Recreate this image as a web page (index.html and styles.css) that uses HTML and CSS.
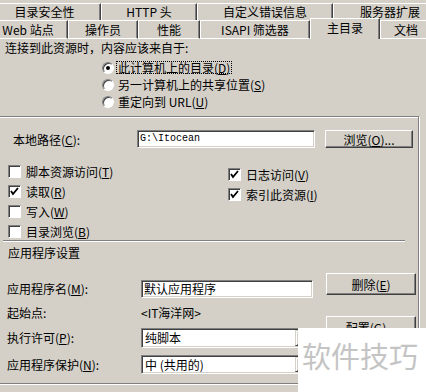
FILE: index.html
```html
<!DOCTYPE html>
<html lang="zh-CN">
<head>
    <meta charset="UTF-8">
    <meta name="viewport" content="width=device-width, initial-scale=1.0">
    <title>主目录</title>
    <link rel="stylesheet" href="styles.css">
</head>
<body>
    <div class="dialog">
        <div class="tabs">
            <div class="tab-row row-back">
                <div class="tab t-dirsec">目录安全性</div>
                <div class="tab t-http">HTTP 头</div>
                <div class="tab t-errors">自定义错误信息</div>
                <div class="tab t-ext">服务器扩展</div>
            </div>
            <div class="tab-row row-front">
                <div class="tab t-web">Web 站点</div>
                <div class="tab t-ops">操作员</div>
                <div class="tab t-perf">性能</div>
                <div class="tab t-isapi">ISAPI 筛选器</div>
                <div class="tab t-home selected">主目录</div>
                <div class="tab t-doc">文档</div>
            </div>
        </div>

        <p class="lead">连接到此资源时，内容应该来自于:</p>

        <div class="radios">
            <div class="radio"><span class="circle on"></span><span class="radio-text focus">此计算机上的目录(<u>D</u>)</span></div>
            <div class="radio"><span class="circle"></span><span class="radio-text">另一计算机上的共享位置(<u>S</u>)</span></div>
            <div class="radio"><span class="circle"></span><span class="radio-text">重定向到 URL(<u>U</u>)</span></div>
        </div>

        <div class="frame">
            <div class="path-row">
                <span class="path-label">本地路径(<u>C</u>):</span>
                <span class="field path-field">G:\Itocean</span>
                <span class="btn browse"><span>浏览(<u>O</u>)...</span></span>
            </div>

            <div class="checks">
                <div class="check-col left">
                    <div class="check"><span class="box"></span><span>脚本资源访问(<u>T</u>)</span></div>
                    <div class="check"><span class="box"><svg width="11" height="11" viewBox="0 0 11 11"><polyline points="2,5 4,8 9,2" fill="none" stroke="#000" stroke-width="1.8"/></svg></span><span>读取(<u>R</u>)</span></div>
                    <div class="check"><span class="box"></span><span>写入(<u>W</u>)</span></div>
                    <div class="check"><span class="box"></span><span>目录浏览(<u>B</u>)</span></div>
                </div>
                <div class="check-col right">
                    <div class="check"><span class="box"><svg width="11" height="11" viewBox="0 0 11 11"><polyline points="2,5 4,8 9,2" fill="none" stroke="#000" stroke-width="1.8"/></svg></span><span>日志访问(<u>V</u>)</span></div>
                    <div class="check"><span class="box"><svg width="11" height="11" viewBox="0 0 11 11"><polyline points="2,5 4,8 9,2" fill="none" stroke="#000" stroke-width="1.8"/></svg></span><span>索引此资源(<u>I</u>)</span></div>
                </div>
            </div>

            <div class="etch"></div>
            <div class="group-title">应用程序设置</div>

            <div class="app-grid">
                <span class="app-label row-a">应用程序名(<u>M</u>):</span>
                <span class="field app-name">默认应用程序</span>
                <span class="btn btn-delete"><span>删除(<u>E</u>)</span></span>

                <span class="app-label row-b">起始点:</span>
                <span class="start-point">&lt;IT海洋网&gt;</span>
                <span class="btn btn-config"><span>配置(<u>G</u>)...</span></span>

                <span class="app-label row-c">执行许可(<u>P</u>):</span>
                <span class="field combo combo-c"><span class="combo-text">纯脚本</span><span class="drop"><span class="arrow"></span></span></span>

                <span class="app-label row-d">应用程序保护(<u>N</u>):</span>
                <span class="field combo combo-d"><span class="combo-text">中 (共用的)</span><span class="drop"><span class="arrow"></span></span></span>
            </div>
        </div>

        <div class="watermark">软件技巧</div>
    </div>
</body>
</html>
```

FILE: styles.css
```css
* {
    box-sizing: border-box;
}
body {
    margin: 0;
    background: #d4d0c8;
    font-family: "Noto Sans CJK SC", sans-serif;
    font-size: 12px;
    color: #000;
}
u {
    text-decoration-thickness: 1px;
    text-underline-offset: 1px;
}
.dialog {
    position: relative;
    width: 426px;
    height: 392px;
    overflow: hidden;
}

/* tabs */
.tabs {
    height: 39px;
}
.tab-row {
    display: flex;
    align-items: flex-start;
    margin-left: -12px;
    white-space: nowrap;
}
.row-back {
    height: 20px;
    padding-top: 3px;
}
.row-front {
    height: 19px;
}
.tab {
    flex: none;
    text-align: center;
    border-top: 1px solid #fff;
    border-left: 1px solid #fff;
    border-right: 1px solid #404040;
    box-shadow: inset -1px 0 #808080;
    background: #d4d0c8;
}
.row-back .tab {
    height: 17px;
    line-height: 16px;
}
.row-front .tab {
    height: 19px;
    line-height: 17px;
    border-bottom: 1px solid #fff;
}
.row-front .tab.selected {
    position: relative;
    z-index: 1;
    margin-top: -2px;
    height: 21px;
    line-height: 18px;
    border-bottom: none;
}
.t-dirsec { width: 113px; }
.t-http { width: 96px; }
.t-errors { width: 136px; }
.t-ext { width: 114px; }
.t-web { width: 80px; }
.t-ops { width: 70px; }
.t-perf { width: 62px; }
.t-isapi { width: 110px; }
.t-home { width: 70px; }
.t-doc { width: 52px; }

/* source choice */
.lead {
    margin: 1px 0 0;
    padding-left: 5px;
    height: 16px;
    line-height: 16px;
}
.radios {
    margin-top: 3px;
    padding-left: 102px;
}
.radio {
    display: flex;
    align-items: center;
    height: 17px;
    gap: 2px;
}
.circle {
    position: relative;
    width: 12px;
    height: 12px;
    border-radius: 50%;
    background: #fff;
    border: 1px solid;
    border-color: #808080 #fff #fff #808080;
    box-shadow: inset 1px 1px #404040;
}
.circle.on::after {
    content: "";
    position: absolute;
    left: 3px;
    top: 3px;
    width: 4px;
    height: 4px;
    border-radius: 50%;
    background: #000;
}
.radio-text {
    padding: 0 2px;
    line-height: 13px;
}
.radio-text.focus {
    padding: 0 1px;
    line-height: 11px;
    border: 1px dotted #000;
}

/* lower frame */
.frame {
    margin: 6px 0 0 -2px;
    width: 421px;
    height: 268px;
    border: 1px solid #808080;
    box-shadow: inset 1px 1px #fff, 1px 1px #fff;
}
.path-row {
    display: flex;
    align-items: center;
    margin-top: 13px;
    height: 18px;
}
.path-label {
    width: 138px;
    padding-left: 14px;
}
.field {
    display: block;
    background: #fff;
    border: 1px solid;
    border-color: #808080 #fff #fff #808080;
    box-shadow: inset 1px 1px #404040, inset -1px -1px #d4d0c8;
    padding-left: 2px;
    white-space: nowrap;
}
.path-field {
    width: 178px;
    height: 18px;
    line-height: 16px;
    font-family: "Liberation Mono", monospace;
    font-size: 10px;
}
.btn {
    display: flex;
    align-items: center;
    justify-content: center;
    background: #d4d0c8;
    border: 1px solid;
    border-color: #fff #404040 #404040 #fff;
    box-shadow: inset -1px -1px #808080;
    white-space: nowrap;
}
.browse {
    margin-left: 10px;
    width: 88px;
    height: 18px;
}

.checks {
    display: flex;
    margin-top: 13px;
    height: 79px;
}
.check-col.left {
    width: 229px;
    padding-left: 9px;
}
.check-col.right {
    margin-top: 3px;
}
.check {
    display: flex;
    align-items: center;
    gap: 5px;
    height: 20px;
}
.box {
    display: flex;
    align-items: center;
    justify-content: center;
    width: 13px;
    height: 13px;
    background: #fff;
    border: 1px solid;
    border-color: #808080 #fff #fff #808080;
    box-shadow: inset 1px 1px #404040;
}

.etch {
    margin-left: 4px;
    width: 402px;
    height: 2px;
    border-top: 1px solid #808080;
    border-bottom: 1px solid #fff;
}
.group-title {
    margin-top: 2px;
    padding-left: 9px;
    line-height: 17px;
}

.app-grid {
    display: grid;
    grid-template-columns: 121px 172px 90px;
    grid-template-rows: 18px 30px 20px 26px;
    column-gap: 13px;
    margin-top: 19px;
    padding-left: 8px;
}
.app-label {
    grid-column: 1;
    align-self: center;
    line-height: 16px;
}
.row-a { grid-row: 1; }
.row-b { grid-row: 2; }
.row-c { grid-row: 3; }
.row-d {
    grid-row: 4;
    align-self: end;
    line-height: 19px;
}
.app-name {
    grid-column: 2;
    grid-row: 1;
    height: 18px;
    line-height: 16px;
}
.start-point {
    grid-column: 2;
    grid-row: 2;
    align-self: center;
    line-height: 16px;
}
.btn-delete {
    grid-column: 3;
    grid-row: 1;
    align-self: start;
    margin-top: -7px;
    height: 22px;
}
.btn-config {
    grid-column: 3;
    grid-row: 2;
    align-self: start;
    margin-top: 18px;
    height: 22px;
}
.combo {
    display: flex;
    grid-column: 2;
    padding: 1px;
}
.combo-c {
    grid-row: 3;
    height: 20px;
}
.combo-d {
    grid-row: 4;
    align-self: end;
    height: 19px;
}
.combo-text {
    flex: 1;
    padding-left: 2px;
    line-height: 16px;
}
.drop {
    display: flex;
    align-items: center;
    justify-content: center;
    width: 16px;
    background: #d4d0c8;
    border: 1px solid;
    border-color: #d4d0c8 #404040 #404040 #d4d0c8;
    box-shadow: inset 1px 1px #fff, inset -1px -1px #808080;
}
.arrow {
    width: 0;
    height: 0;
    border-left: 4px solid transparent;
    border-right: 4px solid transparent;
    border-top: 4px solid #000;
}

/* site watermark over the corner */
.watermark {
    position: absolute;
    left: 298px;
    top: 328px;
    width: 128px;
    height: 64px;
    background: #fff;
    color: #c4c4c4;
    font-size: 29px;
    line-height: 29px;
    padding: 13px 0 0 4px;
    white-space: nowrap;
}
```
